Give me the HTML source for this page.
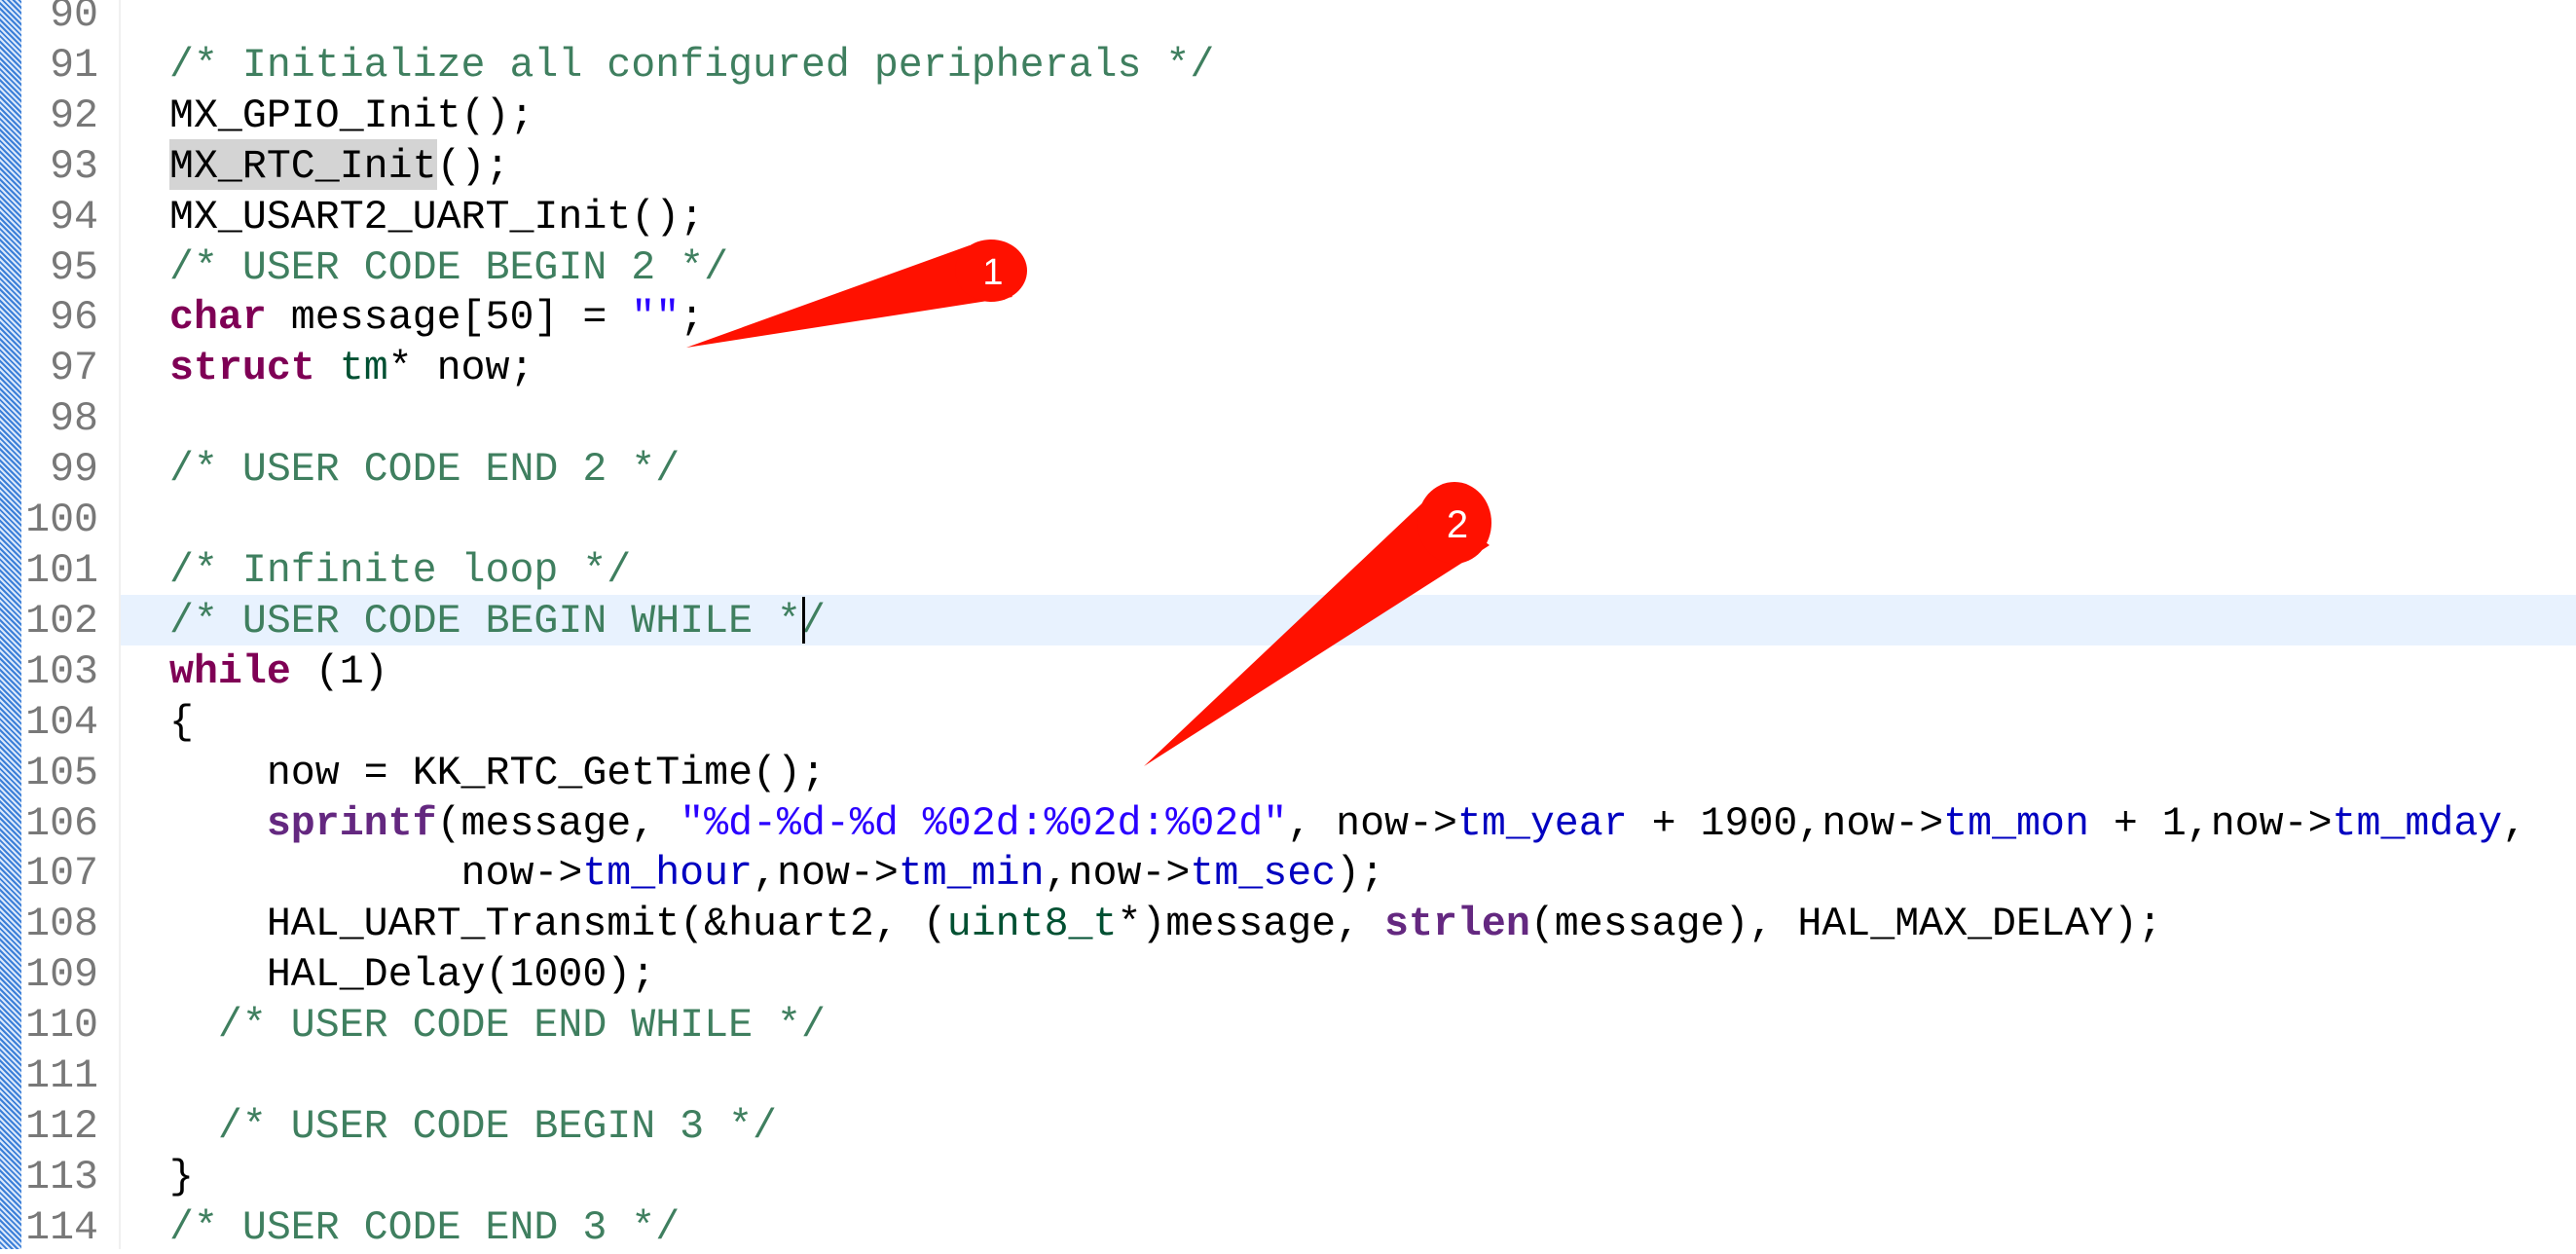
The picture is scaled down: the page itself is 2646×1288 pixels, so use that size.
<!DOCTYPE html>
<html><head><meta charset="utf-8"><style>
html,body{margin:0;padding:0;width:2646px;height:1283px;overflow:hidden;background:#fff;}
.strip{position:absolute;left:0;top:0;width:22px;height:1283px;background:repeating-linear-gradient(45deg,#3b7fd8 0 2px,#dbe8fa 2px 4px);}
.sep{position:absolute;left:122px;top:0;width:2px;height:1283px;background:#f0f0f0;}
.cur{position:absolute;left:124px;top:611px;width:2522px;height:52px;background:#e8f2fe;}
.sel{position:absolute;left:174px;top:143px;width:275px;height:52px;background:#d4d4d4;}
.caret{position:absolute;left:824px;top:613px;width:3px;height:48px;background:#000;}
.nums{position:absolute;left:0;top:-10px;width:101px;text-align:right;font:41.6px/51.9px "Liberation Mono",monospace;color:#787878;white-space:pre;}
.code{position:absolute;left:174px;top:-10px;font:41.6px/51.9px "Liberation Mono",monospace;color:#000;white-space:pre;}
.c{color:#3f7f5f}.k{color:#7f0055;font-weight:bold}.s{color:#2a00ff}.f{color:#0000c0}.t{color:#005032}.m{color:#642880;font-weight:bold}
svg{position:absolute;left:0;top:0}
</style></head><body>
<div class="strip"></div><div class="sep"></div><div class="cur"></div><div class="sel"></div>
<div class="nums">90
91
92
93
94
95
96
97
98
99
100
101
102
103
104
105
106
107
108
109
110
111
112
113
114</div>
<div class="code">
<span class="c">/* Initialize all configured peripherals */</span>
MX_GPIO_Init();
MX_RTC_Init();
MX_USART2_UART_Init();
<span class="c">/* USER CODE BEGIN 2 */</span>
<span class="k">char</span> message[50] = <span class="s">""</span>;
<span class="k">struct</span> <span class="t">tm</span>* now;

<span class="c">/* USER CODE END 2 */</span>

<span class="c">/* Infinite loop */</span>
<span class="c">/* USER CODE BEGIN WHILE */</span>
<span class="k">while</span> (1)
{
    now = KK_RTC_GetTime();
    <span class="m">sprintf</span>(message, <span class="s">"%d-%d-%d %02d:%02d:%02d"</span>, now-&gt;<span class="f">tm_year</span> + 1900,now-&gt;<span class="f">tm_mon</span> + 1,now-&gt;<span class="f">tm_mday</span>,
            now-&gt;<span class="f">tm_hour</span>,now-&gt;<span class="f">tm_min</span>,now-&gt;<span class="f">tm_sec</span>);
    HAL_UART_Transmit(&amp;huart2, (<span class="t">uint8_t</span>*)message, <span class="m">strlen</span>(message), HAL_MAX_DELAY);
    HAL_Delay(1000);
  <span class="c">/* USER CODE END WHILE */</span>

  <span class="c">/* USER CODE BEGIN 3 */</span>
}
<span class="c">/* USER CODE END 3 */</span></div>
<div class="caret"></div>
<svg width="2646" height="1283">
<path d="M705,357 L996,252 L1040,305 Z" fill="#ff1100"/>
<ellipse cx="1018" cy="278" rx="37" ry="32" fill="#ff1100"/>
<text x="1020" y="292" fill="#fff" font-family="Liberation Sans,sans-serif" font-size="38" text-anchor="middle">1</text>
<path d="M1175,787 L1466,512 L1530,560 Z" fill="#ff1100"/>
<ellipse cx="1494" cy="537" rx="38" ry="42" fill="#ff1100"/>
<text x="1497" y="552" fill="#fff" font-family="Liberation Sans,sans-serif" font-size="40" text-anchor="middle">2</text>
</svg>
</body></html>
